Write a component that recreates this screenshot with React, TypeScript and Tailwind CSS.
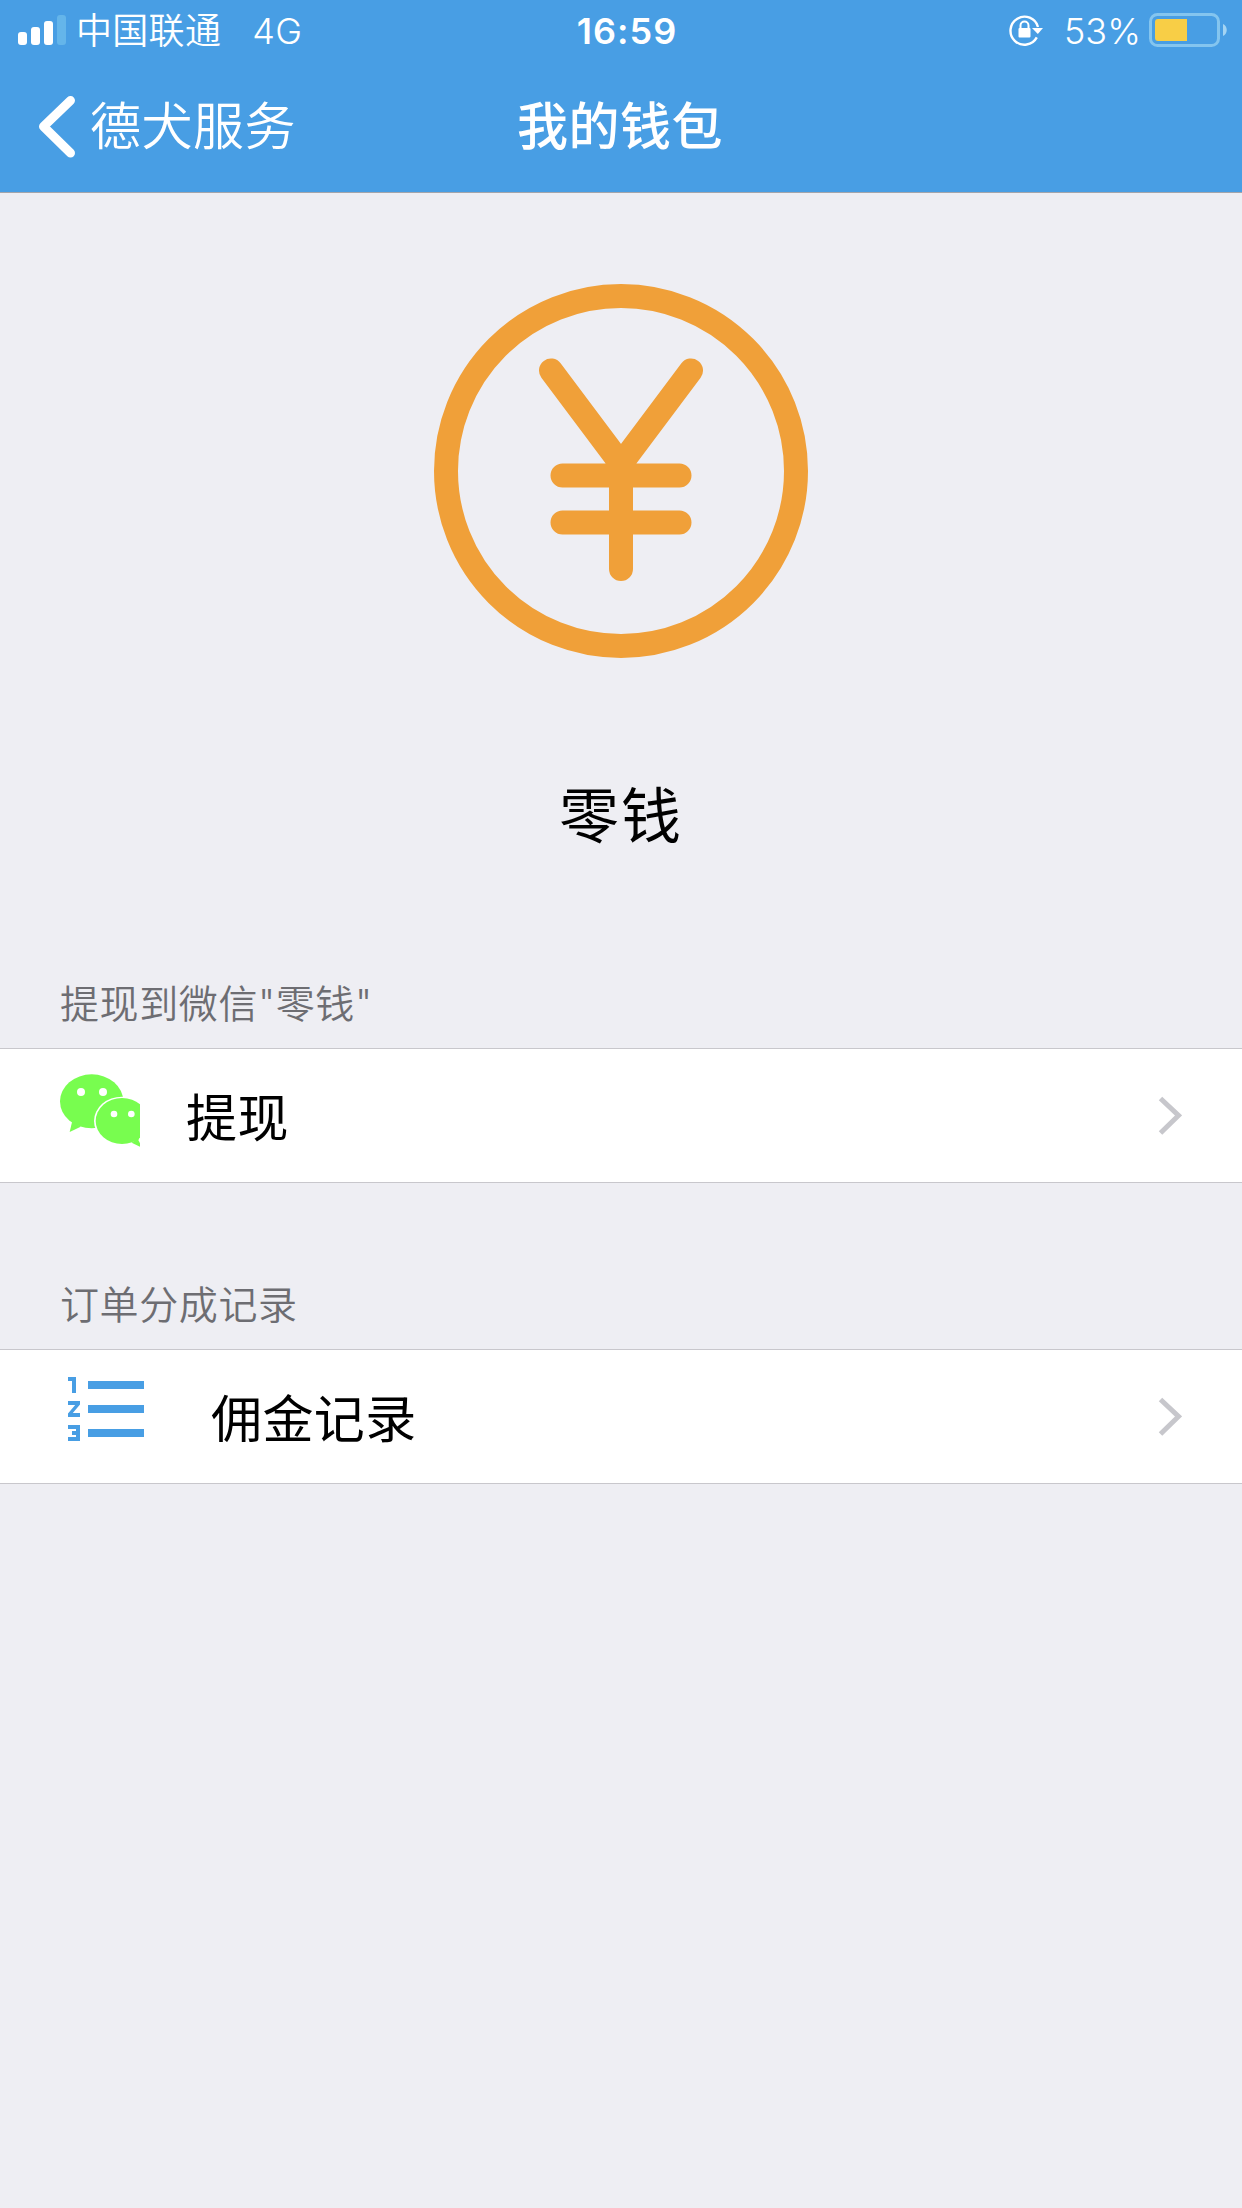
import { FC, ReactNode } from 'react';
import { MdFormatListNumbered } from 'react-icons/md';

const StatusBar: FC = () => (
  <div className="flex h-[60px] items-center text-[36px] leading-[60px]">
    <div className="flex w-[500px] items-center">
      <svg className="ml-[18px] h-[30px] w-[48px]" viewBox="0 0 48 30" fill="#fff">
        <rect x="0" y="17" width="9" height="13" rx="3" />
        <rect x="13" y="12" width="9" height="18" rx="3" />
        <rect x="26" y="6" width="9" height="24" rx="3" />
        <rect x="39" y="0" width="9" height="30" rx="3" fill="#64b5ea" />
      </svg>
      <span className="ml-[10px] pt-[2px] font-[350] tracking-[0.3px]">中国联通</span>
      <span className="ml-[31px] pt-[2px] font-[350] tracking-[0.3px]">4G</span>
    </div>
    <div className="flex w-[254px] justify-center pt-[2px] font-semibold tracking-[1px]">16:59</div>
    <div className="flex flex-1 items-center">
      <svg className="ml-[255px] h-[32px] w-[36px] shrink-0" viewBox="0 0 36 32" fill="none">
        <path d="M27.8 23.4A14 14 0 1 1 29 13" stroke="#fff" strokeWidth="2.4" />
        <path d="M23 14h11l-5.200 6z" fill="#fff" />
        <path d="M11.500 15v-3.500a4 4 0 0 1 8 0V15" stroke="#fff" strokeWidth="2" />
        <rect x="9.500" y="14" width="12" height="9.500" rx="1" fill="#fff" />
      </svg>
      <span className="ml-[19px] pt-[2px] font-[350]">53%</span>
      <svg className="ml-[8px] h-[34px] w-[80px] shrink-0" viewBox="0 0 80 34" fill="none">
        <rect x="1.500" y="1.500" width="68" height="31" rx="7" stroke="#84c5ef" strokeWidth="3" />
        <path d="M9 6h29v22H9a3 3 0 0 1-3-3V9a3 3 0 0 1 3-3z" fill="#f8ce46" />
        <path d="M74 11c5 2 5 10 0 12z" fill="#a3d4f3" />
      </svg>
    </div>
  </div>
);

const NavBar: FC = () => (
  <div className="flex h-[132px] items-center text-[51px] tracking-[0.5px]">
    <div className="flex w-[517px] items-center">
      <svg className="ml-[38px] h-[64px] w-[38px]" viewBox="0 0 38 64" fill="none">
        <path d="M32.500 6.500L5.500 32.500L32.500 59" stroke="#fff" strokeWidth="9" strokeLinecap="round" strokeLinejoin="round" />
      </svg>
      <span className="ml-[14px] pt-[2px] font-[350]">德犬服务</span>
    </div>
    <h1 className="pt-[2px] font-medium">我的钱包</h1>
  </div>
);

const YenIcon: FC = () => (
  <svg className="h-[374px] w-[374px]" viewBox="0 0 374 374" fill="none" stroke="#f0a039" strokeWidth="24" strokeLinecap="round">
    <circle cx="187" cy="187" r="175" />
    <path d="M117 86.500L187 180L257 86.500M187 180V285M128.500 191.500H245.500M128.500 238.500H245.500" />
  </svg>
);

const WechatIcon: FC = () => (
  <svg className="h-[73px] w-[80px]" viewBox="0 0 240 219" fill="#78fd4f">
    <ellipse cx="95" cy="82" rx="95" ry="81" />
    <path d="M37 140L29 174L62 158z" />
    <ellipse cx="186" cy="141" rx="84" ry="73" fill="#fff" />
    <ellipse cx="186" cy="141" rx="79" ry="69" />
    <path d="M215 206L240 218V199L236 190z" />
    <path d="M235 198L240 192V208z" fill="#fff" />
    <g fill="#fff">
      <circle cx="63" cy="54" r="12" />
      <circle cx="129" cy="54" r="12" />
      <circle cx="162" cy="120" r="10" />
      <circle cx="214" cy="120" r="10" />
    </g>
  </svg>
);

const Chevron: FC = () => (
  <svg className="mr-[60px] ml-auto h-[40px] w-[24px]" viewBox="0 0 24 40" fill="none">
    <path d="M2.500 2.500L20.500 19.500L2.500 37" stroke="#c7c7cc" strokeWidth="5" />
  </svg>
);

type SectionProps = {
  title: string;
  children: ReactNode;
};

const Section: FC<SectionProps> = ({ title, children }) => (
  <section>
    <h2 className="h-[86px] pt-[13px] pl-[60px] text-[39px] leading-[58px] font-[350] tracking-[0.6px] text-[#6d6d72]">{title}</h2>
    <div className="flex h-[135px] items-center border-y border-[#c8c7cc] bg-white text-[51px] tracking-[0.4px] text-black">
      {children}
      <Chevron />
    </div>
  </section>
);

export default function App() {
  return (
    <div className="min-h-[2208px] w-[1242px] bg-[#eeeef3] font-['Inter','Noto_Sans_CJK_SC',sans-serif]">
      <header className="h-[193px] border-b border-[#a3a5ab] bg-[#489ee4] text-white">
        <StatusBar />
        <NavBar />
      </header>

      <div className="flex h-[769px] flex-col items-center pt-[91px] text-black">
        <YenIcon />
        <p className="mt-[113px] text-[60px] leading-[90px] tracking-[2px]">零钱</p>
      </div>

      <div className="flex flex-col gap-[80px]">
        <Section title={'提现到微信"零钱"'}>
          <div className="ml-[60px] pb-[10px]">
            <WechatIcon />
          </div>
          <span className="ml-[46px] pt-[8px]">提现</span>
        </Section>
        <Section title="订单分成记录">
          <MdFormatListNumbered className="mb-[16px] ml-[60px] h-[96px] w-[96px] text-[#489ee4]" />
          <span className="ml-[55px] pt-[8px]">佣金记录</span>
        </Section>
      </div>
    </div>
  );
}
